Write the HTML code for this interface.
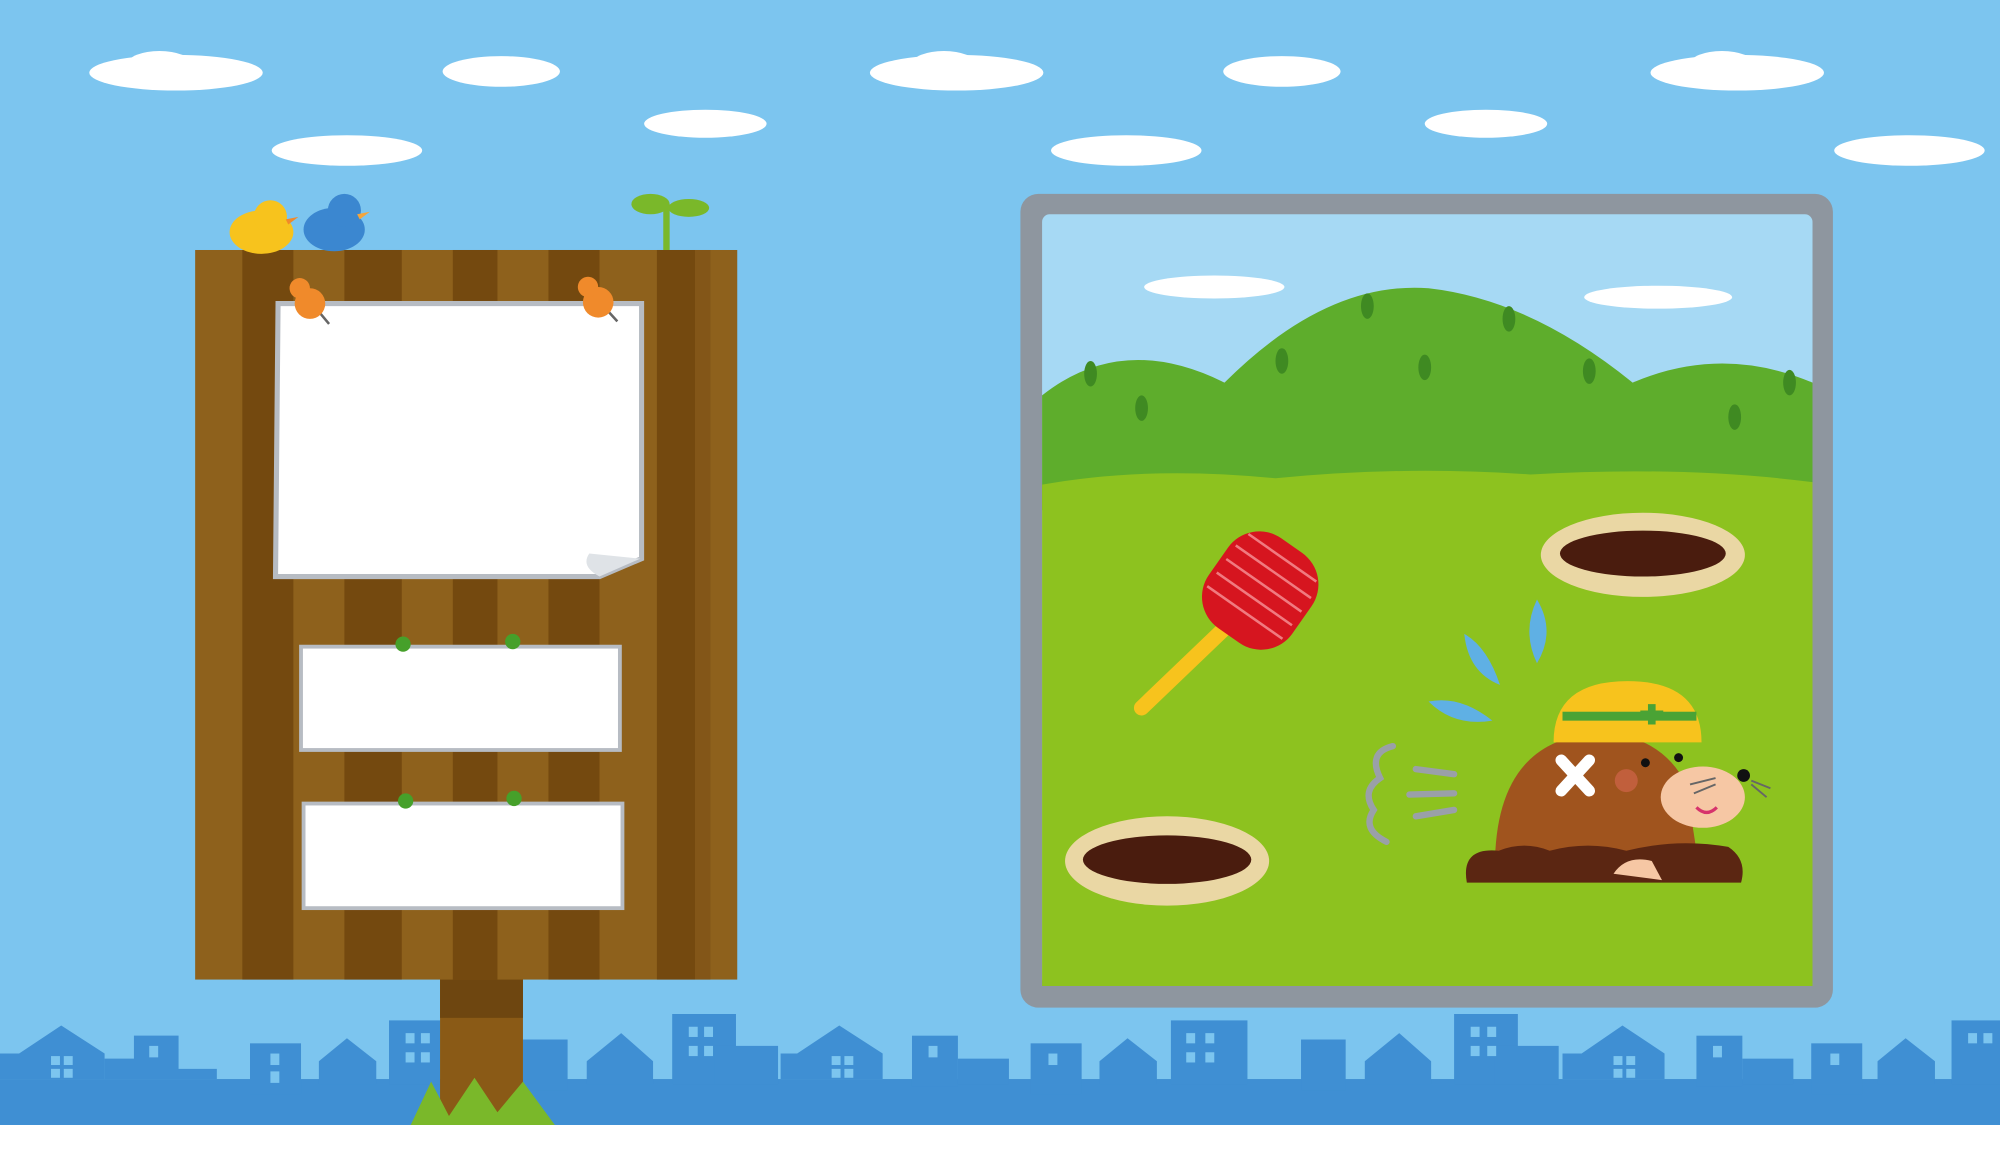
<!DOCTYPE html>
<html><head><meta charset="utf-8"><style>
html,body{margin:0;padding:0;background:#fff;}
svg{display:block;}
</style></head><body>
<svg width="2000" height="1164" viewBox="0 0 1568 912.6" preserveAspectRatio="none" xmlns="http://www.w3.org/2000/svg">
<rect x="0" y="0" width="1568" height="882" fill="#7cc5ef"/>
<g fill="#fff">
<ellipse cx="138" cy="57" rx="68" ry="14"/><ellipse cx="125" cy="50" rx="25" ry="10"/>
<ellipse cx="393" cy="56" rx="46" ry="12"/>
<ellipse cx="750" cy="57" rx="68" ry="14"/><ellipse cx="740" cy="50" rx="25" ry="10"/>
<ellipse cx="1005" cy="56" rx="46" ry="12"/>
<ellipse cx="1362" cy="57" rx="68" ry="14"/><ellipse cx="1350" cy="50" rx="25" ry="10"/>
<ellipse cx="272" cy="118" rx="59" ry="12"/>
<ellipse cx="553" cy="97" rx="48" ry="11"/>
<ellipse cx="883" cy="118" rx="59" ry="12"/>
<ellipse cx="1165" cy="97" rx="48" ry="11"/>
<ellipse cx="1497" cy="118" rx="59" ry="12"/>
</g>
<!-- skyline -->
<g fill="#3f8fd3">
<rect x="0" y="846" width="1568" height="36"/>
<path d="M0 846 V826 H15 L48 804 L82 826 V846Z"/>
<path d="M82 830 H105 V812 H140 V838 H170 V846 H82Z"/>
<rect x="196" y="818" width="40" height="40"/><path d="M250 832 L272 814 L295 832 V850 H250Z"/>
<rect x="305" y="800" width="40" height="50"/>
<rect x="410" y="815" width="35" height="40"/><path d="M460 832 L487 810 L512 832 V850 H460Z"/>
<rect x="527" y="795" width="50" height="55"/><rect x="560" y="820" width="50" height="30"/>
<path d="M612 846 V826 H625 L658 804 L692 826 V846 Z"/>
<rect x="715" y="812" width="36" height="40"/><rect x="751" y="830" width="40" height="20"/>
<rect x="808" y="818" width="40" height="40"/><path d="M862 832 L884 814 L907 832 V850 H862Z"/>
<rect x="918" y="800" width="60" height="50"/>
<rect x="1020" y="815" width="35" height="40"/><path d="M1070 832 L1097 810 L1122 832 V850 H1070Z"/>
<rect x="1140" y="795" width="50" height="55"/><rect x="1172" y="820" width="50" height="30"/>
<path d="M1225 846 V826 H1240 L1272 804 L1305 826 V846 Z"/>
<rect x="1330" y="812" width="36" height="40"/><rect x="1366" y="830" width="40" height="20"/>
<rect x="1420" y="818" width="40" height="40"/><path d="M1472 832 L1494 814 L1517 832 V850 H1472Z"/>
<rect x="1530" y="800" width="38" height="50"/>
</g>
<g fill="#7cc5ef">
<rect x="40" y="828" width="7" height="7"/><rect x="50" y="828" width="7" height="7"/><rect x="40" y="838" width="7" height="7"/><rect x="50" y="838" width="7" height="7"/>
<rect x="117" y="820" width="7" height="9"/>
<rect x="212" y="826" width="7" height="9"/><rect x="212" y="840" width="7" height="9"/>
<rect x="318" y="810" width="7" height="8"/><rect x="330" y="810" width="7" height="8"/><rect x="318" y="825" width="7" height="8"/><rect x="330" y="825" width="7" height="8"/>
<rect x="540" y="805" width="7" height="8"/><rect x="552" y="805" width="7" height="8"/><rect x="540" y="820" width="7" height="8"/><rect x="552" y="820" width="7" height="8"/>
<rect x="652" y="828" width="7" height="7"/><rect x="662" y="828" width="7" height="7"/><rect x="652" y="838" width="7" height="7"/><rect x="662" y="838" width="7" height="7"/>
<rect x="728" y="820" width="7" height="9"/>
<rect x="822" y="826" width="7" height="9"/>
<rect x="930" y="810" width="7" height="8"/><rect x="945" y="810" width="7" height="8"/><rect x="930" y="825" width="7" height="8"/><rect x="945" y="825" width="7" height="8"/>
<rect x="1153" y="805" width="7" height="8"/><rect x="1166" y="805" width="7" height="8"/><rect x="1153" y="820" width="7" height="8"/><rect x="1166" y="820" width="7" height="8"/>
<rect x="1265" y="828" width="7" height="7"/><rect x="1275" y="828" width="7" height="7"/><rect x="1265" y="838" width="7" height="7"/><rect x="1275" y="838" width="7" height="7"/>
<rect x="1343" y="820" width="7" height="9"/>
<rect x="1435" y="826" width="7" height="9"/>
<rect x="1543" y="810" width="7" height="8"/><rect x="1555" y="810" width="7" height="8"/>
</g>
<!-- post -->
<rect x="345" y="760" width="65" height="122" fill="#8a5a16"/>
<rect x="345" y="768" width="65" height="30" fill="#6e4610"/>
<path d="M322 882 L338 848 L352 875 L372 845 L390 872 L410 848 L435 882Z" fill="#7ab82a"/>
<!-- board -->
<rect x="153" y="196" width="425" height="572" fill="#8e611c"/>
<g fill="#74490f">
<rect x="190" y="196" width="40" height="572"/><rect x="270" y="196" width="45" height="572"/>
<rect x="355" y="196" width="35" height="572"/><rect x="430" y="196" width="40" height="572"/>
<rect x="515" y="196" width="30" height="572"/>
</g>
<rect x="545" y="196" width="12" height="572" fill="#835618"/>
<!-- birds & sprout -->
<ellipse cx="205" cy="182" rx="25" ry="17" fill="#f7c31d"/><circle cx="212" cy="170" r="13" fill="#f7c31d"/><path d="M224 172 l10 -2 -8 6z" fill="#f08a2b"/>
<ellipse cx="262" cy="180" rx="24" ry="17" fill="#3b87d0"/><circle cx="270" cy="165" r="13" fill="#3b87d0"/><path d="M280 168 l10 -2 -8 6z" fill="#f6a53a"/>
<rect x="520" y="160" width="5" height="36" fill="#7ab82a"/>
<ellipse cx="510" cy="160" rx="15" ry="8" fill="#7ab82a"/><ellipse cx="540" cy="163" rx="16" ry="7" fill="#7ab82a"/>
<!-- papers -->
<path d="M218 238 H503 V438 L470 452 H216 Z" fill="#fff" stroke="#b7bcc3" stroke-width="4"/>
<path d="M470 452 q-15 -8 -8 -18 l40 4z" fill="#dfe3e7"/>
<rect x="236" y="507" width="250" height="81" fill="#fff" stroke="#b7bcc3" stroke-width="3"/>
<rect x="238" y="630" width="250" height="82" fill="#fff" stroke="#b7bcc3" stroke-width="3"/>
<g stroke="#666" stroke-width="2"><line x1="248" y1="242" x2="258" y2="254"/><line x1="474" y1="241" x2="484" y2="252"/></g>
<g fill="#f08a2b"><circle cx="243" cy="238" r="12"/><circle cx="235" cy="226" r="8"/><circle cx="469" cy="237" r="12"/><circle cx="461" cy="225" r="8"/></g>
<g fill="#46a02a"><circle cx="316" cy="505" r="6"/><circle cx="402" cy="503" r="6"/><circle cx="318" cy="628" r="6"/><circle cx="403" cy="626" r="6"/></g>
<!-- frame -->
<rect x="800" y="152" width="637" height="638" rx="14" fill="#8e969f"/>
<rect x="817" y="168" width="604" height="605" rx="6" fill="#a6d9f4"/>
<ellipse cx="952" cy="225" rx="55" ry="9" fill="#fff"/>
<ellipse cx="1300" cy="233" rx="58" ry="9" fill="#fff"/>
<path d="M817 310 Q880 260 960 300 Q1040 220 1120 226 Q1200 235 1280 300 Q1350 270 1421 300 V400 H817Z" fill="#5ead2c"/>
<path d="M817 380 Q900 365 1000 375 Q1100 365 1200 372 Q1320 365 1421 378 V773 H817Z" fill="#8dc21f"/>
<g fill="#3f8a22"><ellipse cx="855" cy="293" rx="5" ry="10"/><ellipse cx="895" cy="320" rx="5" ry="10"/><ellipse cx="1005" cy="283" rx="5" ry="10"/><ellipse cx="1072" cy="240" rx="5" ry="10"/><ellipse cx="1117" cy="288" rx="5" ry="10"/><ellipse cx="1183" cy="250" rx="5" ry="10"/><ellipse cx="1246" cy="291" rx="5" ry="10"/><ellipse cx="1360" cy="327" rx="5" ry="10"/><ellipse cx="1403" cy="300" rx="5" ry="10"/></g>
<ellipse cx="1288" cy="435" rx="80" ry="33" fill="#ead7a4"/><ellipse cx="1288" cy="434" rx="65" ry="18" fill="#4a1c0e"/>
<ellipse cx="915" cy="675" rx="80" ry="35" fill="#ead7a4"/><ellipse cx="915" cy="674" rx="66" ry="19" fill="#4a1c0e"/>
<!-- hammer -->
<line x1="895" y1="555" x2="1015" y2="440" stroke="#f7c31d" stroke-width="12" stroke-linecap="round"/>
<g transform="rotate(35 988 463)"><rect x="948" y="420" width="80" height="86" rx="30" fill="#d6151f"/>
<g stroke="#f07a80" stroke-width="2"><line x1="955" y1="432" x2="1020" y2="432"/><line x1="952" y1="445" x2="1024" y2="445"/><line x1="952" y1="458" x2="1024" y2="458"/><line x1="952" y1="471" x2="1024" y2="471"/><line x1="952" y1="484" x2="1024" y2="484"/></g></g>
<!-- drops -->
<g fill="#5fb0e4"><path d="M1148 497 q18 10 28 40 q-25 -10 -28 -40z"/><path d="M1205 470 q15 25 0 50 q-12 -25 0 -50z"/><path d="M1120 550 q25 -5 50 15 q-30 5 -50 -15z"/></g>
<g stroke="#9aa0a8" stroke-width="5" fill="none" stroke-linecap="round"><path d="M1092 585 q-20 5 -10 25 q-15 10 -5 25 q-10 15 10 25"/><line x1="1110" y1="603" x2="1140" y2="607"/><line x1="1105" y1="623" x2="1140" y2="622"/><line x1="1110" y1="640" x2="1140" y2="635"/></g>
<!-- mole -->
<path d="M1172 680 q0 -100 80 -105 q50 0 70 40 l10 65 z" fill="#a0541e"/>
<ellipse cx="1335" cy="625" rx="33" ry="24" fill="#f6c7a4"/>
<circle cx="1367" cy="608" r="5" fill="#111"/>
<g stroke="#666" stroke-width="1.5"><line x1="1345" y1="610" x2="1325" y2="615"/><line x1="1345" y1="615" x2="1328" y2="622"/><line x1="1373" y1="612" x2="1388" y2="618"/><line x1="1373" y1="615" x2="1385" y2="625"/></g>
<path d="M1330 633 q8 8 16 0" stroke="#d6336c" stroke-width="2.5" fill="none"/>
<circle cx="1275" cy="612" r="9" fill="#e26a5a" opacity="0.5"/>
<path d="M1150 692 q-5 -28 25 -25 q20 -8 40 0 q30 -8 60 0 q40 -10 80 -3 q15 10 10 28 z" fill="#5b2612"/>
<path d="M1265 685 q10 -15 30 -10 l8 15 z" fill="#f6c7a4"/>
<path d="M1218 582 q0 -48 58 -48 q58 0 58 48 z" fill="#f7c31d"/><rect x="1225" y="558" width="105" height="7" fill="#4aa335"/>
<path d="M1286 557 h6 v-5 h6 v5 h6 v6 h-6 v5 h-6 v-5 h-6z" fill="#4aa335"/>
<g stroke="#fff" stroke-width="9" stroke-linecap="round"><line x1="1224" y1="596" x2="1246" y2="620"/><line x1="1246" y1="596" x2="1224" y2="620"/></g>
<circle cx="1290" cy="598" r="3.5" fill="#111"/><circle cx="1316" cy="594" r="3.5" fill="#111"/>
</svg>
</body></html>
